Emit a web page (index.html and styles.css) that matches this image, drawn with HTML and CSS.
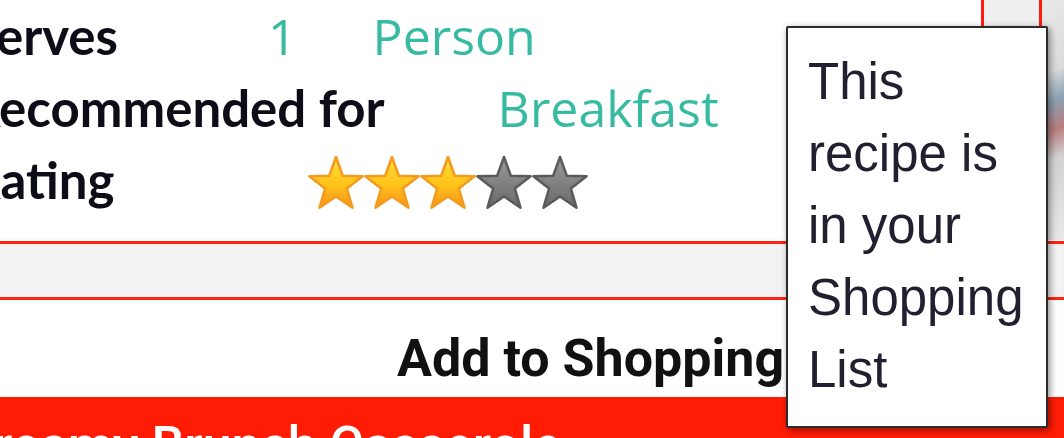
FILE: index.html
```html
<!DOCTYPE html>
<html>
  <head>
    <title>Recipe</title>
    <meta charset="UTF-8">
    <link rel="stylesheet" href="styles.css">
  </head>
  <body>
    <div class="recipe">
      <div class="details">
        <div class="row">
          <span class="label">Serves</span>
          <span class="value">1</span>
          <span class="value unit">Person</span>
        </div>
        <div class="row">
          <span class="label">Recommended for</span>
          <span class="value meal">Breakfast</span>
        </div>
        <div class="row">
          <span class="label">Rating</span>
          <svg class="stars" width="282" height="54" viewBox="0 0 282 54">
            <defs>
              <linearGradient id="gold" x1="0" y1="0" x2="0" y2="1">
                <stop offset="0" stop-color="#ffe03a"/>
                <stop offset="0.55" stop-color="#ffc21a"/>
                <stop offset="1" stop-color="#f7931e"/>
              </linearGradient>
              <linearGradient id="grey" x1="0" y1="0" x2="0" y2="1">
                <stop offset="0" stop-color="#9a9a9a"/>
                <stop offset="1" stop-color="#6a6a6a"/>
              </linearGradient>
              <polygon id="star" points="28,2 34.8,20.7 54.6,21.3 38.9,33.6 44.5,52.7 28,41.5 11.5,52.7 17.1,33.6 1.4,21.3 21.2,20.7"/>
            </defs>
            <use href="#star" x="0" fill="url(#gold)" stroke="#f59a1c" stroke-width="2.5" stroke-linejoin="round"/>
            <use href="#star" x="56" fill="url(#gold)" stroke="#f59a1c" stroke-width="2.5" stroke-linejoin="round"/>
            <use href="#star" x="112" fill="url(#gold)" stroke="#f59a1c" stroke-width="2.5" stroke-linejoin="round"/>
            <use href="#star" x="168" fill="url(#grey)" stroke="#5a5a5a" stroke-width="2.5" stroke-linejoin="round"/>
            <use href="#star" x="224" fill="url(#grey)" stroke="#5a5a5a" stroke-width="2.5" stroke-linejoin="round"/>
          </svg>
        </div>
      </div>
      <div class="band"></div>
      <div class="add">Add to Shopping List</div>
      <div class="title">Creamy Brunch Casserole</div>

      <!-- shopping list button + its tooltip -->
      <div class="cart"></div>
      <div class="thumb"></div>
      <div class="tooltip">This recipe is in your Shopping List</div>
    </div>
  </body>
</html>
```

FILE: styles.css
```css
body
{
  margin: 0;
  padding: 0;
  width: 1064px;
  height: 438px;
  overflow: hidden;
  background: #fff;
}
.recipe
{
  position: relative;
  height: 438px;
}
.details
{
  padding-bottom: 25px;
  border-bottom: 3px solid #ff2312;
}
.row
{
  display: flex;
  align-items: center;
  height: 72px;
  line-height: 72px;
  margin-left: -32px;
}
.label
{
  font-family: "Lato", "Liberation Sans", sans-serif;
  font-weight: 700;
  font-size: 51px;
  color: #0d0d18;
  min-width: 300px;
}
.value
{
  font-family: "Open Sans", "Liberation Sans", sans-serif;
  font-size: 50px;
  color: #36bba2;
}
.unit
{
  margin-left: 76px;
}
.meal
{
  margin-left: 113px;
}
.stars
{
  display: block;
  margin-left: 40px;
  margin-top: 4px;
}
.band
{
  height: 53px;
  background: #f2f2f2;
  border-bottom: 3px solid #ff2312;
}
.add
{
  height: 77px;
  padding-top: 20px;
  line-height: 78px;
  padding-left: 397px;
  font-family: "Roboto", "Liberation Sans", sans-serif;
  font-weight: 700;
  font-size: 52px;
  color: #111;
  white-space: nowrap;
}
.title
{
  background: #ff1c05;
  color: #fff;
  height: 41px;
  padding-top: 18px;
  box-sizing: border-box;
  overflow: hidden;
  font-family: "Roboto", "Liberation Sans", sans-serif;
  font-weight: 500;
  font-size: 52px;
  line-height: 62px;
  white-space: nowrap;
  margin-left: -40px;
}
.cart
{
  position: absolute;
  top: 0;
  left: 981px;
  width: 61px;
  height: 80px;
  box-sizing: border-box;
  border-left: 3px solid #ff1a0a;
  border-right: 3px solid #ff1a0a;
  background: #efefef;
}
.thumb
{
  position: absolute;
  top: 0;
  left: 1042px;
  width: 22px;
  height: 240px;
  background: linear-gradient(160deg, #e8e8e8 0, #dadada 30%, #8aa2b4 42%, #b97d7d 54%, #d2d2d2 66%, #e8e8e8 100%);
}
.tooltip
{
  position: absolute;
  top: 26px;
  left: 786px;
  width: 262px;
  height: 402px;
  box-sizing: border-box;
  padding: 18px 18px 0 20px;
  background: #fff;
  border: 2px solid #2b2b2b;
  border-radius: 2px;
  box-shadow: 2px 2px 7px rgba(0, 0, 0, 0.45);
  font-family: "Liberation Sans", Arial, sans-serif;
  font-size: 51px;
  line-height: 72px;
  color: #202030;
}
```
